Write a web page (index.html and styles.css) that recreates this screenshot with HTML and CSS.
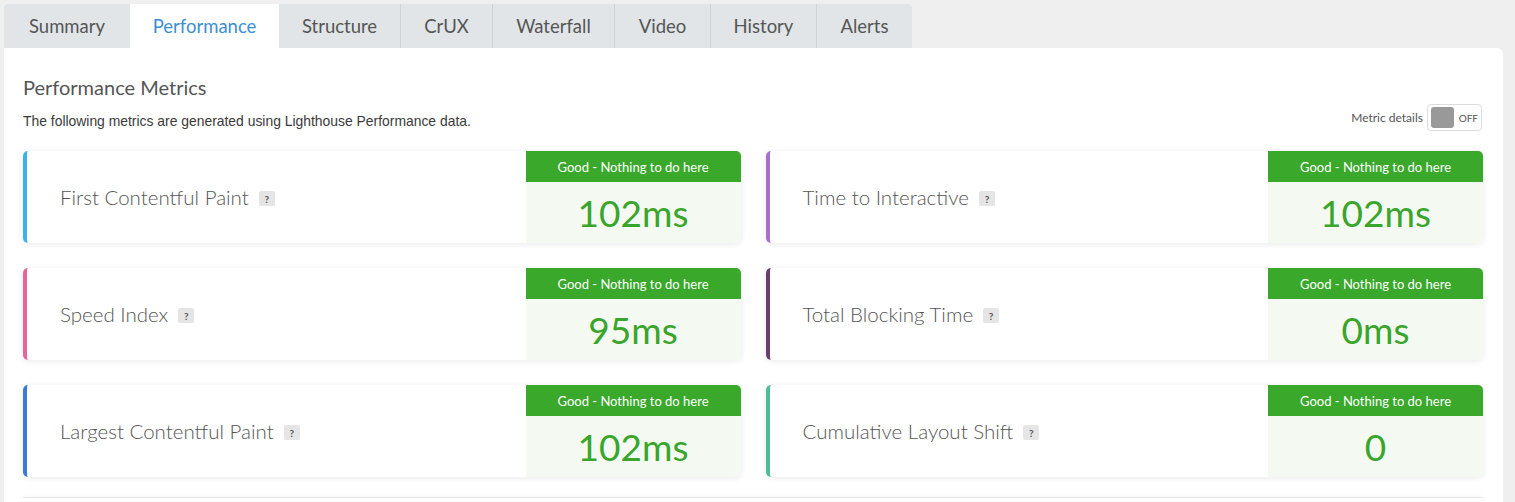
FILE: index.html
```html
<!DOCTYPE html>
<html>
<head>
<meta charset="utf-8">
<link rel="stylesheet" href="styles.css">
</head>
<body>
<div class="page">
  <nav class="tabs">
    <div class="tab first">Summary</div>
    <div class="tab active">Performance</div>
    <div class="tab">Structure</div>
    <div class="tab">CrUX</div>
    <div class="tab">Waterfall</div>
    <div class="tab">Video</div>
    <div class="tab">History</div>
    <div class="tab last">Alerts</div>
  </nav>
  <section class="panel">
    <div class="head">
      <div class="head-text">
        <h2 class="title">Performance Metrics</h2>
        <p class="sub">The following metrics are generated using Lighthouse Performance data.</p>
      </div>
      <div class="toggle-wrap">
        <span class="toggle-label">Metric details</span>
        <span class="toggle"><span class="knob"></span><span class="off">OFF</span></span>
      </div>
    </div>
    <div class="grid">
      <div class="card c-fcp">
        <div class="label">First Contentful Paint <span class="q">?</span></div>
        <div class="grade"><div class="grade-head">Good - Nothing to do here</div><div class="grade-val">102ms</div></div>
      </div>
      <div class="card c-tti">
        <div class="label">Time to Interactive <span class="q">?</span></div>
        <div class="grade"><div class="grade-head">Good - Nothing to do here</div><div class="grade-val">102ms</div></div>
      </div>
      <div class="card c-si">
        <div class="label">Speed Index <span class="q">?</span></div>
        <div class="grade"><div class="grade-head">Good - Nothing to do here</div><div class="grade-val">95ms</div></div>
      </div>
      <div class="card c-tbt">
        <div class="label">Total Blocking Time <span class="q">?</span></div>
        <div class="grade"><div class="grade-head">Good - Nothing to do here</div><div class="grade-val">0ms</div></div>
      </div>
      <div class="card c-lcp">
        <div class="label">Largest Contentful Paint <span class="q">?</span></div>
        <div class="grade"><div class="grade-head">Good - Nothing to do here</div><div class="grade-val">102ms</div></div>
      </div>
      <div class="card c-cls">
        <div class="label">Cumulative Layout Shift <span class="q">?</span></div>
        <div class="grade"><div class="grade-head">Good - Nothing to do here</div><div class="grade-val">0</div></div>
      </div>
    </div>
    <div class="more"></div>
  </section>
</div>
</body>
</html>
```

FILE: styles.css
```css
html, body {
  margin: 0;
  padding: 0;
}
body {
  background: #efefef;
  font-family: Lato, "Open Sans", sans-serif;
  color: #555;
  height: 502px;
  overflow: hidden;
}
.page {
  padding: 4px 12px 0 4px;
}
.tabs {
  display: flex;
  height: 44px;
}
.tab {
  display: flex;
  align-items: center;
  justify-content: center;
  background: #e1e5e8;
  color: #555;
  font-size: 18.5px;
  padding: 0 23px;
  border-left: 1px solid #cfd3d6;
}
.tab.first {
  border-left: none;
  border-top-left-radius: 4px;
  width: 80px;
}
.tab.last {
  border-top-right-radius: 4px;
  width: 49px;
}
.tab.active {
  background: #fff;
  color: #3d8fd1;
  border-left: none;
  width: 103px;
}
.tab.active + .tab { border-left: none; }
.tab:nth-child(3) { width: 75px; }
.tab:nth-child(4) { width: 45px; }
.tab:nth-child(5) { width: 75px; }
.tab:nth-child(6) { width: 49px; }
.tab:nth-child(7) { width: 59px; }

.panel {
  background: #fff;
  border-top-right-radius: 6px;
  padding: 26px 20px 0 19px;
  height: 460px;
}
.head {
  display: flex;
  justify-content: space-between;
  align-items: flex-end;
}
.title {
  margin: 0;
  font-size: 20px;
  font-weight: 400;
  line-height: 26px;
  color: #555;
}
.sub {
  margin: 13px 0 0;
  font-family: "Liberation Sans", Arial, sans-serif;
  font-size: 13.9px;
  line-height: 16px;
  color: #3a3a3a;
}
.toggle-wrap {
  display: flex;
  align-items: center;
  gap: 4px;
  margin-bottom: -2px;
  margin-right: 1px;
}
.toggle-label {
  font-size: 12px;
  color: #555;
}
.toggle {
  display: flex;
  align-items: center;
  box-sizing: border-box;
  width: 55px;
  height: 27px;
  border: 1px solid #ddd;
  border-radius: 4px;
  padding: 0 3px;
  gap: 5px;
}
.knob {
  width: 23px;
  height: 21px;
  background: #999;
  border-radius: 3px;
}
.off {
  font-size: 10px;
  color: #555;
}

.grid {
  display: grid;
  grid-template-columns: 1fr 1fr;
  column-gap: 25px;
  row-gap: 25px;
  margin-top: 22px;
}
.card {
  display: flex;
  height: 92px;
  background: #fff;
  border-left: 4px solid #3bb3ea;
  border-radius: 5px;
  box-shadow: 0 1px 6px rgba(0,0,0,0.09);
}
.c-tti { border-left-color: #a96fc9; }
.c-si { border-left-color: #e8649b; }
.c-tbt { border-left-color: #6a3f6e; }
.c-lcp { border-left-color: #3d79d8; }
.c-cls { border-left-color: #4cbd99; }
.label {
  flex: 1;
  display: flex;
  align-items: center;
  padding-left: 33px;
  font-size: 20.5px;
  font-weight: 300;
  color: #555;
}
.q {
  display: inline-flex;
  align-items: center;
  justify-content: center;
  width: 16px;
  height: 15px;
  margin-left: 10px;
  margin-top: 3px;
  background: #e5e5e5;
  border-radius: 2px;
  font-size: 10px;
  font-weight: 700;
  color: #555;
}
.grade {
  width: 215px;
  display: flex;
  flex-direction: column;
  border-radius: 0 5px 5px 0;
  overflow: hidden;
}
.grade-head {
  height: 31px;
  display: flex;
  align-items: center;
  justify-content: center;
  background: #39a82b;
  color: #fff;
  font-size: 13px;
}
.grade-val {
  flex: 1;
  display: flex;
  align-items: center;
  justify-content: center;
  background: #f4faf2;
  color: #39a52b;
  font-size: 37px;
  font-weight: 400;
}
.more {
  margin-top: 20px;
  height: 20px;
  border-top: 1px solid #e8e8e8;
  box-shadow: 0 -1px 4px rgba(0,0,0,0.04);
}
```
